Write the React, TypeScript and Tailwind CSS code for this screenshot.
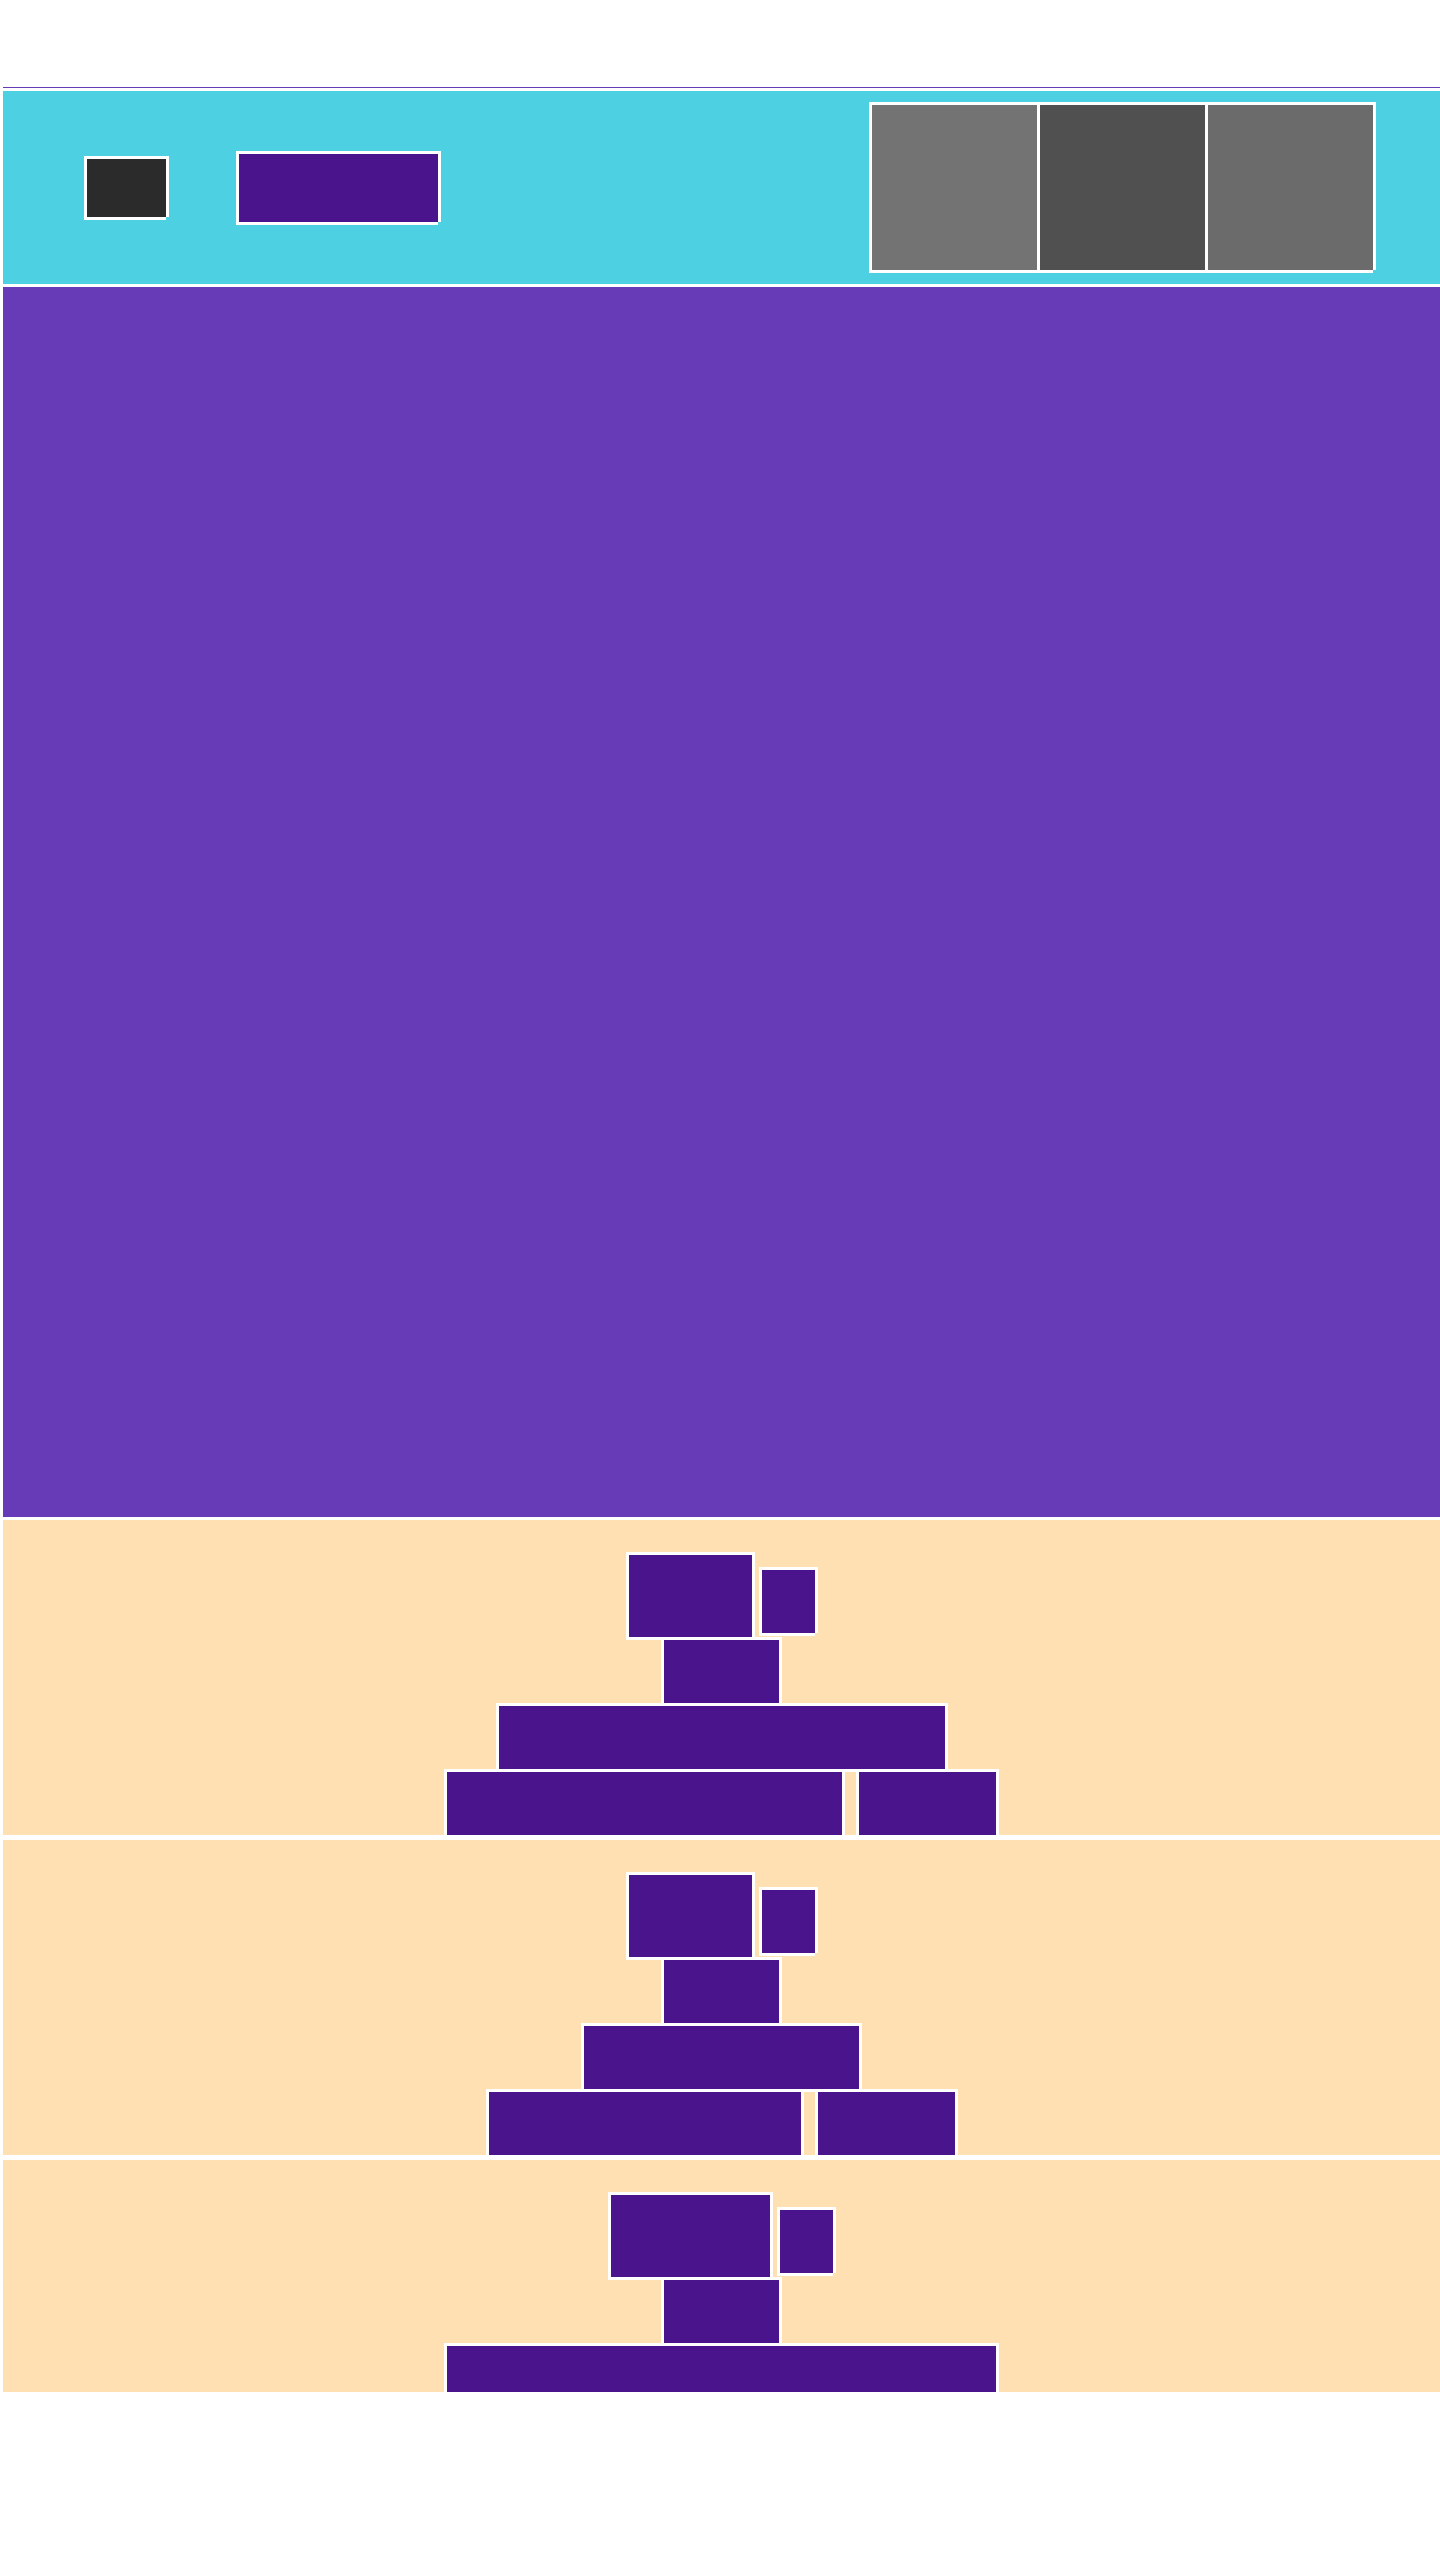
const block = "border-l-[3px] border-t-[3px] border-white shadow-[3px_0_0_#fff,0_3px_0_#fff]";
const box = `${block} bg-[#4a148c]`;

type Layout = {
  a: string;
  c: string;
  d?: string;
  e?: string;
  f?: string;
  wide?: string;
};

function Section({ a, c, d, e, f, wide }: Layout) {
  return (
    <section className="mt-[2px] h-[318px] border-t-[3px] border-white bg-[#ffe0b2] pt-[32px] flex flex-col items-center first:mt-0">
      <div className="flex items-start gap-[7px] pr-[3px]">
        <div className={`${box} ${a} h-[85px]`} />
        <div className={`${box} w-[56px] h-[66px] mt-[15px]`} />
      </div>
      <div className="pr-[3px]">
        <div className={`${box} ${c} h-[66px]`} />
      </div>
      {d && (
        <div className="pr-[3px]">
          <div className={`${box} ${d} h-[66px]`} />
        </div>
      )}
      {e && f && (
        <div className="flex gap-[14px] pr-[3px]">
          <div className={`${box} ${e} h-[66px]`} />
          <div className={`${box} ${f} h-[66px]`} />
        </div>
      )}
      {wide && (
        <div className="pr-[3px]">
          <div className={`${box} ${wide} h-[66px]`} />
        </div>
      )}
    </section>
  );
}

export default function App() {
  return (
    <div className="mt-[87px] h-[2305px] overflow-hidden bg-white pl-[3px]">
      <div className="h-px bg-[#673ab7]" />

      {/* header bar */}
      <header className="h-[196px] border-t-[3px] border-white bg-[#4dd0e1] flex items-center pb-[3px] pl-[81px] pr-[67px]">
        <div className={`${block} bg-[#2b2b2b] w-[82px] h-[61px]`} />
        <div className={`${block} bg-[#4a148c] w-[202px] h-[71px] ml-[70px]`} />
        <div className="ml-auto flex">
          <div className={`${block} bg-[#737373] w-[168px] h-[168px]`} />
          <div className={`${block} bg-[#505050] w-[168px] h-[168px]`} />
          <div className={`${block} bg-[#6b6b6b] w-[168px] h-[168px]`} />
        </div>
      </header>

      {/* hero */}
      <main className="h-[1233px] border-t-[3px] border-white bg-[#673ab7]" />

      <div className="flex flex-col">
        <Section a="w-[126px]" c="w-[118px]" d="w-[449px]" e="w-[398px]" f="w-[140px]" />
        <Section a="w-[126px]" c="w-[118px]" d="w-[278px]" e="w-[315px]" f="w-[140px]" />
        <Section a="w-[162px]" c="w-[118px]" wide="w-[552px]" />
      </div>
    </div>
  );
}
